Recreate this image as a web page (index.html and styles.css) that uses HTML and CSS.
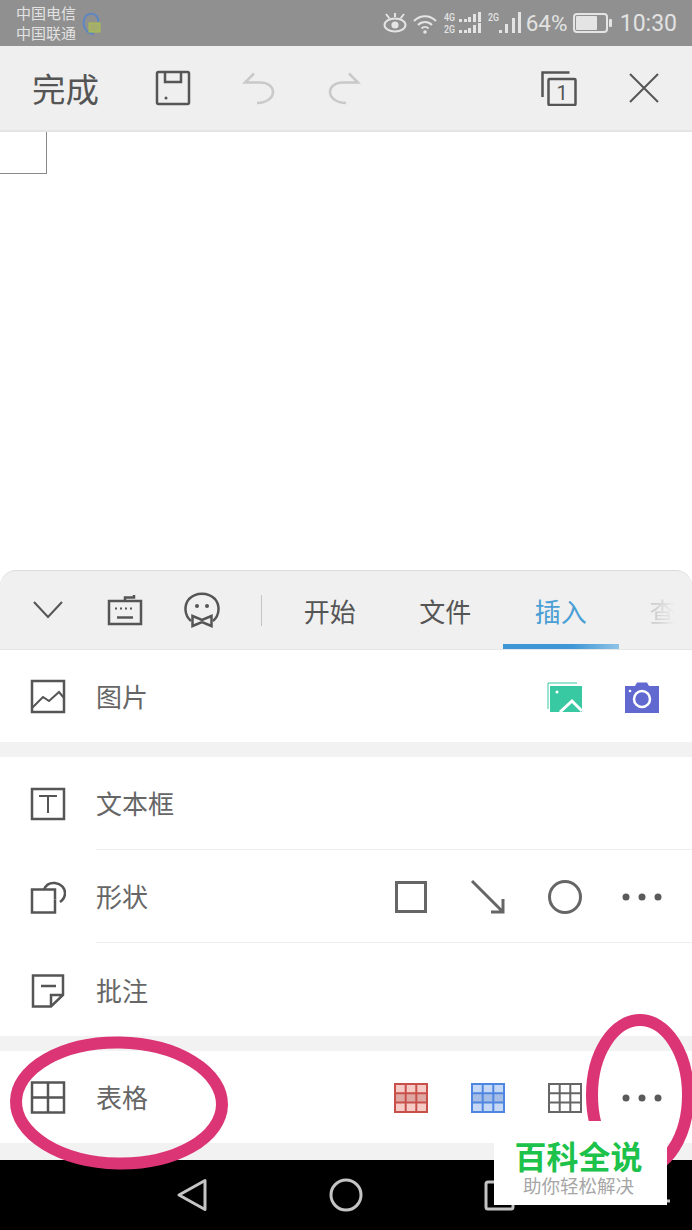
FILE: index.html
```html
<!DOCTYPE html>
<html lang="zh">
<head>
<meta charset="utf-8">
<title>插入</title>
<link rel="stylesheet" href="styles.css">
</head>
<body>
<div class="page">
  <header class="status">
    <div class="carriers"><span>中国电信</span><span>中国联通</span></div>
    <svg class="vpn" width="22" height="26" viewBox="0 0 22 26"><path class="vpn-arc" d="M5 18C1 13 2 3 9 2c6-1 9 4 8 8"/><path class="vpn-arc" d="M5 18c2 2 5 4 8 4"/><rect class="vpn-box" x="8" y="11" width="11" height="9"/></svg>
    <div class="status-right">
      <svg width="24" height="24" viewBox="0 0 24 24"><ellipse class="st" cx="12" cy="14" rx="10.500" ry="6.500"/><circle class="sf" cx="12" cy="14" r="3.600"/><path class="st" d="M3 3l3.500 4.500M21 3l-3.500 4.500M12 2v4"/></svg>
      <svg width="24" height="24" viewBox="0 0 24 24"><path class="st" d="M1 10c6-6.500 16-6.500 22 0M5 14c4-4 10-4 14 0M8.500 17.500c2-2 5-2 7 0"/><circle class="sf" cx="12" cy="21" r="1.800"/></svg>
      <svg width="38" height="24" viewBox="0 0 38 24"><text class="st-txt" x="1" y="10" textLength="11" lengthAdjust="spacingAndGlyphs">4G</text><text class="st-txt" x="1" y="22" textLength="11" lengthAdjust="spacingAndGlyphs">2G</text><path class="sf" d="M16 8h3v3h-3zM21 8h3v3h-3zM25 6h3v5h-3zM30 3h3v8h-3zM35 1h3v10h-3zM16 19h3v3h-3zM21 19h3v3h-3zM25 17h3v5h-3zM30 14h3v8h-3zM35 12h3v10h-3z"/></svg>
      <svg class="sig2" width="35" height="24" viewBox="0 0 35 24"><text class="st-txt" x="1" y="10" textLength="11" lengthAdjust="spacingAndGlyphs">2G</text><path class="sf" d="M12 19h3v3h-3zM18 13h3v9h-3zM25 7h3v15h-3zM31 1h3v21h-3z"/></svg>
      <span class="pct">64%</span>
      <svg width="39" height="24" viewBox="0 0 39 24"><rect class="st" x="1" y="3" width="33" height="18" rx="3"/><rect class="sf" x="3" y="5" width="21" height="14" rx="1"/><rect class="sf" x="36" y="8" width="3" height="8" rx="1"/></svg>
      <span class="clock">10:30</span>
    </div>
  </header>

  <nav class="toolbar">
    <span class="done">完成</span>
    <span class="tb-slot tb-first"><svg width="36" height="36" viewBox="0 0 36 36"><rect class="ic" x="2" y="2" width="32" height="32" rx="1.500"/><path class="ic" d="M10 2v10h16V2"/><circle class="ic-fill" cx="11" cy="28" r="1.500"/></svg></span>
    <span class="tb-slot"><svg width="36" height="36" viewBox="0 0 36 36"><path class="ic-off" d="M14 3.500L5 12.500h15c8 0 13 4 13 9.500s-6 11-16 11"/></svg></span>
    <span class="tb-slot"><svg width="36" height="36" viewBox="0 0 36 36"><path class="ic-off" d="M23 3.500l9 9H17C9 12.500 4 16.500 4 22s6 11 16 11"/></svg></span>
    <span class="tb-slot tb-right"><svg width="36" height="36" viewBox="0 0 36 36"><path class="ic" d="M1.500 27V2.500h27"/><rect class="ic" x="7.500" y="9" width="27" height="26" rx="1"/><text class="one" x="21" y="30">1</text></svg></span>
    <span class="tb-slot"><svg width="36" height="36" viewBox="0 0 36 36"><path class="ic-thin" d="M4 4l28 28M32 4L4 32"/></svg></span>
  </nav>

  <main class="doc"><div class="cell"></div></main>

  <section class="panel">
    <div class="tabbar">
      <span class="tab-ic"><svg width="36" height="36" viewBox="0 0 36 36"><path class="ic-thin" d="M4 10l14 15 14-15"/></svg></span>
      <span class="tab-ic"><svg width="38" height="36" viewBox="0 0 38 36"><rect class="ic" x="3" y="9" width="32" height="23"/><path class="ic" d="M19 9V5.500h9V3M11 25.500h16"/><path class="ic-dots" d="M9 16.500h20"/></svg></span>
      <span class="tab-ic"><svg width="38" height="38" viewBox="0 0 38 38"><path class="ic" d="M8 30C1 24 1 14 6 8c7-7 19-7 26 0 5 6 5 16-2 22"/><circle class="ic-fill" cx="14" cy="15" r="2"/><circle class="ic-fill" cx="24" cy="15" r="2"/><path class="ic" d="M9.500 25l9.500 4 9.500-4v10L19 31 9.500 35z"/></svg></span>
      <span class="tab-sep"></span>
      <div class="tabs">
        <span class="tab">开始</span>
        <span class="tab">文件</span>
        <span class="tab tab-on">插入</span>
        <span class="tab tab-fade">查</span>
      </div>
    </div>

    <div class="row">
      <span class="row-ic"><svg width="36" height="36" viewBox="0 0 36 36"><rect class="ic" x="2" y="2" width="32" height="31"/><path class="ic-s" d="M2 29l11-11 6 4 10-9 5 6"/></svg></span>
      <div class="row-body row-short">
        <span class="label">图片</span>
        <div class="tools">
          <span class="tool"><svg width="36" height="32" viewBox="0 0 36 32"><path class="pic-back" d="M1 28V2h29"/><rect class="pic" x="3" y="5" width="32" height="26"/><circle class="pic-w" cx="10" cy="11" r="1.500"/><path class="pic-m" d="M13 31l12-11 10 10"/></svg></span>
          <span class="tool"><svg width="36" height="32" viewBox="0 0 36 32"><path class="cam" d="M1 5h10l2-3.500h10L25 5h10v27H1z"/><circle class="cam-o" cx="18" cy="18" r="8"/><circle class="cam-d" cx="6" cy="10" r="1.300"/></svg></span>
        </div>
      </div>
    </div>

    <div class="sep"></div>

    <div class="row">
      <span class="row-ic"><svg width="36" height="36" viewBox="0 0 36 36"><rect class="ic" x="2" y="2" width="32" height="30"/><path class="ic-s" d="M9 9h18M18 9v17"/></svg></span>
      <div class="row-body row-line"><span class="label">文本框</span></div>
    </div>
    <div class="row">
      <span class="row-ic"><svg width="36" height="36" viewBox="0 0 36 36"><path class="ic" d="M14 9.500H2v23h23v-13"/><path class="ic-round" d="M14 9.500c2-5 6-7 11-6.500 6 .5 10 5 10 10 0 4-2 7-5 9"/><path class="ic" d="M14 9.500h11v10"/></svg></span>
      <div class="row-body row-line">
        <span class="label">形状</span>
        <div class="tools">
          <span class="tool"><svg width="36" height="36" viewBox="0 0 36 36"><rect class="shape" x="3.500" y="3.500" width="29" height="29"/></svg></span>
          <span class="tool"><svg width="36" height="36" viewBox="0 0 36 36"><path class="shape" d="M2 2l31 31M33 20v13H21"/></svg></span>
          <span class="tool"><svg width="36" height="36" viewBox="0 0 36 36"><circle class="shape" cx="18" cy="18" r="15.500"/></svg></span>
          <span class="tool"><svg class="more" width="40" height="8" viewBox="0 0 40 8"><circle class="dot" cx="4" cy="4" r="3.500"/><circle class="dot" cx="20" cy="4" r="3.500"/><circle class="dot" cx="36" cy="4" r="3.500"/></svg></span>
        </div>
      </div>
    </div>
    <div class="row">
      <span class="row-ic"><svg width="36" height="36" viewBox="0 0 36 36"><path class="ic" d="M3 2.500h30V22L21 33.500H3zM33 22H21v11.500M11 13h15"/></svg></span>
      <div class="row-body"><span class="label">批注</span></div>
    </div>

    <div class="sep"></div>

    <div class="row">
      <span class="row-ic"><svg width="36" height="36" viewBox="0 0 36 36"><path class="ic-bold" d="M2 2.500h32v30H2zM2 17.500h32M18 2.500v30"/></svg></span>
      <div class="row-body row-short">
        <span class="label">表格</span>
        <div class="tools">
          <span class="tool"><svg width="36" height="32" viewBox="0 0 36 32"><rect class="red-a" x="2" y="2" width="32" height="28"/><rect class="red-b" x="2" y="11.300" width="32" height="9.300"/><path class="red-l" d="M2 2h32v28H2zM12.700 2v28M23.300 2v28M2 11.300h32M2 20.600h32"/></svg></span>
          <span class="tool"><svg width="36" height="32" viewBox="0 0 36 32"><rect class="blue-a" x="2" y="2" width="32" height="28"/><rect class="blue-b" x="2" y="11.300" width="32" height="9.300"/><path class="blue-l" d="M2 2h32v28H2zM12.700 2v28M23.300 2v28M2 11.300h32M2 20.600h32"/></svg></span>
          <span class="tool"><svg width="36" height="32" viewBox="0 0 36 32"><path class="gray-l" d="M2 2h32v28H2zM12.700 2v28M23.300 2v28M2 11.300h32M2 20.600h32"/></svg></span>
          <span class="tool"><svg class="more" width="40" height="8" viewBox="0 0 40 8"><circle class="dot" cx="4" cy="4" r="3.500"/><circle class="dot" cx="20" cy="4" r="3.500"/><circle class="dot" cx="36" cy="4" r="3.500"/></svg></span>
        </div>
      </div>
    </div>

    <div class="sep sep-end"></div>
  </section>

  <footer class="navbar">
    <svg width="36" height="36" viewBox="0 0 36 36"><path class="nav-ic" d="M5 18L31 3.500v29z"/></svg>
    <svg width="36" height="36" viewBox="0 0 36 36"><circle class="nav-ic" cx="18" cy="18" r="15"/></svg>
    <svg width="36" height="36" viewBox="0 0 36 36"><rect class="nav-ic" x="4" y="5" width="27" height="27" rx="2"/></svg>
    <svg width="36" height="36" viewBox="0 0 36 36"><path class="nav-ic" d="M2 24h32"/></svg>
  </footer>

  <svg class="marks" width="692" height="230" viewBox="0 0 692 230">
    <ellipse class="mark" cx="119" cy="103" rx="103" ry="60.500" transform="rotate(1 119 103)"/>
    <ellipse class="mark" cx="640" cy="95" rx="48" ry="75"/>
  </svg>

  <aside class="badge">
    <span class="badge-title">百科全说</span>
    <span class="badge-sub">助你轻松解决</span>
  </aside>
</div>
</body>
</html>
```

FILE: styles.css
```css
* { box-sizing: border-box; }
html, body { margin: 0; padding: 0; background: #fff; }
body { font-family: "Noto Sans CJK SC", "Noto Sans", sans-serif; overflow: hidden; }

.page {
  position: relative;
  width: 692px;
  height: 1230px;
  display: flex;
  flex-direction: column;
  overflow: hidden;
}

/* Status bar */
.status {
  flex: 0 0 46px;
  display: flex;
  align-items: center;
  padding: 0 15px 0 16px;
  background: #909090;
  color: #e2e2e2;
}
.carriers { display: flex; flex-direction: column; font-size: 15px; line-height: 20px; }
.vpn { margin: 4px 0 0 5px; }
.vpn-arc { fill: none; stroke: #5f86c2; stroke-width: 2; }
.vpn-box { fill: #a5ad6c; stroke: #a9c04c; stroke-width: 1; }
.status-right { margin-left: auto; display: flex; align-items: center; gap: 6px; }
.st { fill: none; stroke: #e4e4e4; stroke-width: 2; }
.sf { fill: #e4e4e4; }
.st-txt { font-family: "Roboto", sans-serif; font-size: 11px; font-weight: 500; fill: #e4e4e4; }
.sig2 { margin-right: -2px; }
.pct { font-family: "Roboto", sans-serif; font-size: 22.500px; width: 41px; white-space: nowrap; }
.clock { font-family: "Roboto", sans-serif; font-size: 23px; margin-left: 2px; }

/* Toolbar */
.toolbar {
  flex: 0 0 86px;
  display: flex;
  align-items: center;
  padding: 0 5px 1px 32px;
  background: #efefef;
  border-bottom: 2px solid #e4e4e4;
}
.done { font-size: 33.500px; line-height: 1; width: 67px; color: #555; white-space: nowrap; margin-top: 1px; }
.tb-slot { flex: 0 0 85.500px; display: flex; justify-content: center; align-items: center; }
.tb-first { margin-left: 31px; }
.tb-right { margin-left: auto; }

.ic, .ic-s, .ic-thin, .ic-bold, .ic-round { fill: none; stroke: #555; stroke-width: 2.500; }
.ic-thin { stroke-width: 2; }
.ic-s { stroke-width: 2; }
.ic-bold { stroke-width: 2.500; }
.ic-fill { fill: #555; }
.ic-off { fill: none; stroke: #c9c9c9; stroke-width: 2.500; }
.ic-dots { fill: none; stroke: #555; stroke-width: 2; stroke-dasharray: 2 3; }
.one { font-family: "Roboto", sans-serif; font-size: 20px; fill: #555; text-anchor: middle; }

/* Document */
.doc { flex: 1 1 auto; background: #fff; min-height: 0; }
.cell { width: 47px; height: 42px; border-right: 1px solid #8a8a8a; border-bottom: 1px solid #8a8a8a; }

/* Panel */
.panel { flex: 0 0 auto; }
.tabbar {
  height: 80px;
  display: flex;
  align-items: center;
  padding-left: 9px;
  background: #f0f0f0;
  border-top: 1px solid #dcdcdc;
  border-bottom: 1px solid #e6e6e6;
  border-radius: 16px 16px 0 0;
}
.tab-ic { flex: 0 0 77px; display: flex; justify-content: center; align-items: center; }
.tab-sep { flex: 0 0 1px; height: 31px; background: #c4c4c4; margin: 0 10px 0 21px; }
.tabs { flex: 1 1 auto; min-width: 0; height: 78px; display: flex; overflow: hidden; }
.tab {
  flex: 0 0 115.500px;
  display: flex;
  align-items: center;
  justify-content: center;
  font-size: 26px;
  color: #555;
}
.tab-on {
  color: #4a9fd4;
  position: relative;
}
.tab-on::after {
  content: "";
  position: absolute;
  left: 0;
  right: 0;
  bottom: 0;
  height: 5px;
  background: linear-gradient(90deg, #3f97d6 0%, #3f97d6 60%, #8fc3e6 100%);
}
.tab-fade {
  flex-basis: 88px;
  color: #cfcfcf;
  -webkit-mask-image: linear-gradient(90deg, #000 42%, transparent 64%);
  mask-image: linear-gradient(90deg, #000 42%, transparent 64%);
}

.row { display: flex; background: #fff; }
.row-ic { flex: 0 0 96px; padding: 2px 0 0 30px; display: flex; align-items: center; }
.row-body { flex: 1 1 auto; height: 93px; display: flex; align-items: center; }
.row-short { height: 92px; }
.row-line { border-bottom: 1px solid #eeeeee; }
.label { font-size: 26px; color: #666; margin: -1px 0 0 0; }
.tools { margin-left: auto; margin-right: 12px; display: flex; }
.tool { flex: 0 0 77px; padding-top: 2px; display: flex; justify-content: center; align-items: center; }
.shape { fill: none; stroke: #666; stroke-width: 3; }
.dot { fill: #5a5a5a; }

.sep { height: 15px; background: #f2f2f2; }
.sep-end { height: 17px; }

.pic { fill: #39c9a2; }
.pic-back { fill: none; stroke: #39c9a2; stroke-width: 1; }
.pic-w { fill: #fff; }
.pic-m { fill: none; stroke: #fff; stroke-width: 3; }
.cam { fill: #6168cf; }
.cam-o { fill: none; stroke: #fff; stroke-width: 2.500; }
.cam-d { fill: #fff; }

.red-a { fill: #f6cbc6; }
.red-b { fill: #dfa7a2; }
.red-l { fill: none; stroke: #c8504a; stroke-width: 2; }
.blue-a { fill: #c5d8f6; }
.blue-b { fill: #a6bde6; }
.blue-l { fill: none; stroke: #4f86e0; stroke-width: 2; }
.gray-l { fill: none; stroke: #666; stroke-width: 2; }

/* Navigation bar */
.navbar {
  flex: 0 0 70px;
  background: #000;
  display: flex;
  align-items: center;
  padding-left: 174px;
  gap: 118px;
}
.nav-ic { fill: none; stroke: #c4c4c4; stroke-width: 3; stroke-linejoin: round; }

/* Annotations over the screenshot */
.marks { position: absolute; left: 0; top: 1000px; pointer-events: none; }
.mark { fill: none; stroke: #dc3575; stroke-width: 12; }
.badge {
  position: absolute;
  left: 494px;
  top: 1121px;
  width: 173px;
  height: 84px;
  padding: 16px 4px 0 0;
  background: #fff;
  display: flex;
  flex-direction: column;
  align-items: center;
}
.badge-title { font-size: 32px; line-height: 36px; font-weight: 700; color: #1cc24a; white-space: nowrap; }
.badge-sub { font-size: 18.500px; line-height: 24px; color: #a6a6a6; white-space: nowrap; }
```
